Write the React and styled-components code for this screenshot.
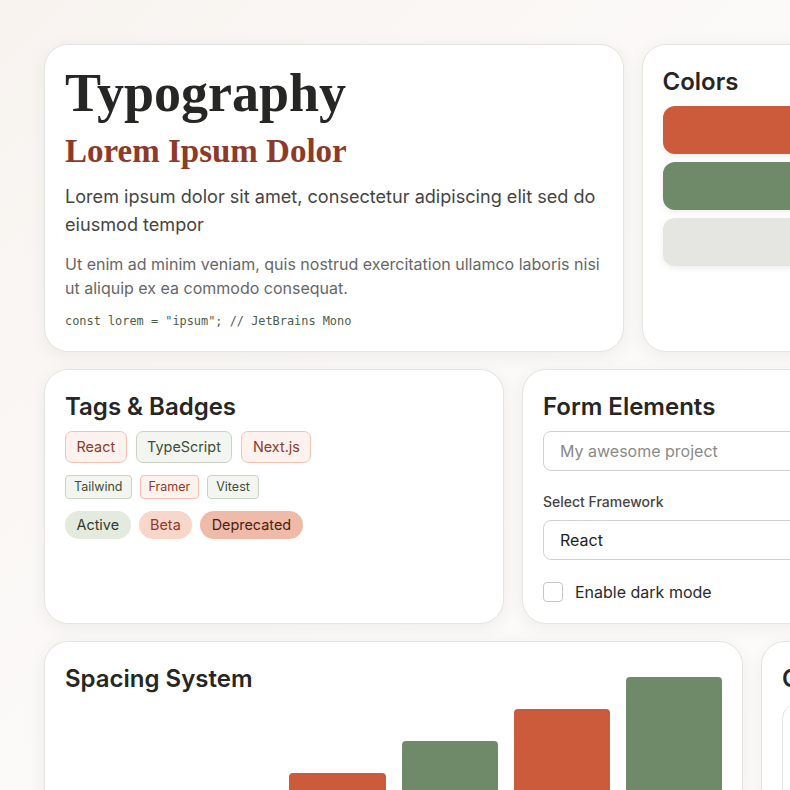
import React from "react";
import styled, { createGlobalStyle } from "styled-components";

const GlobalStyle = createGlobalStyle`
  html, body {
    margin: 0;
    padding: 0;
    overflow: hidden;
  }

  body {
    background: linear-gradient(135deg, #f8f3ef 0%, #fbf9f7 40%, #fdfcfb 100%);
    font-family: Inter, "Noto Sans", sans-serif;
    color: #262624;
  }

  * {
    box-sizing: border-box;
  }
`;

const Page = styled.div`
  padding: 44px;
  width: 1600px;
  min-height: 790px;
`;

const Grid = styled.div`
  display: grid;
  grid-template-columns: repeat(12, 101.5px);
  column-gap: 18px;
  row-gap: 17px;
`;

const Card = styled.section`
  grid-column: span ${(props) => props.$span || 4};
  background: #ffffff;
  border: 1.5px solid #e6e4e0;
  border-radius: 24px;
  padding: 23px 20px 21px;
  box-shadow: 0 4px 18px rgba(40, 30, 20, 0.06);
  overflow: hidden;
`;

const CardTitle = styled.h2`
  margin: 0 0 9px;
  font-size: 24px;
  line-height: 1.2;
  font-weight: 600;
  color: #262624;
  white-space: nowrap;
`;

/* Typography */

const Display = styled.h1`
  margin: -2px 0 0;
  font-family: "Liberation Serif", "Times New Roman", serif;
  font-size: 54px;
  line-height: 1;
  font-weight: 700;
  color: #262624;
`;

const SubDisplay = styled.h3`
  margin: 12px 0 0;
  font-family: "Liberation Serif", "Times New Roman", serif;
  font-size: 33px;
  line-height: 38px;
  font-weight: 700;
  color: #8e3a2a;
`;

const Lead = styled.p`
  margin: 12px 0 0;
  font-size: 18.1px;
  line-height: 28px;
  color: #454545;
`;

const Body = styled.p`
  margin: 14px 0 0;
  font-size: 16px;
  line-height: 24px;
  color: #676767;
`;

const Code = styled.code`
  display: block;
  margin-top: 12px;
  font-family: "DejaVu Sans Mono", "Liberation Mono", monospace;
  font-size: 11.9px;
  line-height: 18px;
  color: #4d5d47;
`;

/* Colors */

const SwatchList = styled.div`
  display: flex;
  flex-direction: column;
  gap: 8px;
`;

const Swatch = styled.div`
  height: 48px;
  border-radius: 12px;
  background: ${(props) => props.$color};
  box-shadow: 0 2px 6px rgba(0, 0, 0, 0.08);
`;

/* Tags */

const TagRows = styled.div`
  display: flex;
  flex-direction: column;
  gap: 12px;
`;

const TagRow = styled.div`
  display: flex;
  gap: ${(props) => props.$gap || 9}px;
`;

const tones = {
  rust: { bg: "#fdf2ee", border: "#f1c1b2", color: "#8e3a2a" },
  sage: { bg: "#f3f6f0", border: "#cad3c2", color: "#3e4c39" },
};

const Tag = styled.span`
  display: inline-flex;
  align-items: center;
  height: ${(props) => (props.$small ? 24 : 32)}px;
  padding: 0 ${(props) => (props.$small ? 8 : 10.5)}px;
  border-radius: ${(props) => (props.$small ? 4 : 7)}px;
  font-size: ${(props) => (props.$small ? 12.5 : 14.4)}px;
  background: ${(props) => tones[props.$tone].bg};
  border: 1px solid ${(props) => tones[props.$tone].border};
  color: ${(props) => tones[props.$tone].color};
`;

const pills = {
  active: { bg: "#e4eadd", color: "#2f3a2c" },
  beta: { bg: "#f8d6ca", color: "#8e3a2a" },
  deprecated: { bg: "#efbba8", color: "#4a1e14" },
};

const Pill = styled.span`
  display: inline-flex;
  align-items: center;
  height: 28px;
  padding: 0 11.5px;
  border-radius: 14px;
  font-size: 14.4px;
  background: ${(props) => pills[props.$kind].bg};
  color: ${(props) => pills[props.$kind].color};
`;

/* Form */

const Field = styled.div`
  display: flex;
  align-items: center;
  height: 40px;
  padding: 0 16px;
  border: 1px solid #d3d1cd;
  border-radius: 8px;
  font-size: 16px;
  color: ${(props) => (props.$placeholder ? "#8a8a88" : "#222")};
  white-space: nowrap;
`;

const Label = styled.label`
  display: block;
  margin: 21px 0 8px;
  font-size: 14px;
  line-height: 20px;
  font-weight: 500;
  color: #454545;
`;

const CheckRow = styled.div`
  display: flex;
  align-items: center;
  gap: 12px;
  margin-top: 22px;
  font-size: 16px;
  color: #2a2a2a;
`;

const Checkbox = styled.span`
  width: 20px;
  height: 20px;
  border: 1.5px solid #c6c5c2;
  border-radius: 4px;
  background: #fff;
`;

/* Spacing */

const Bars = styled.div`
  display: flex;
  align-items: flex-end;
  gap: 16px;
  height: 166px;
`;

const Bar = styled.div`
  flex: 1;
  border-radius: 4px 4px 0 0;
  background: ${(props) => (props.$alt ? "#6f8a69" : "#cb5b3a")};
`;

const InnerCard = styled.div`
  height: 200px;
  border: 1.5px solid #e6e4e0;
  border-radius: 16px;
  background: #fff;
`;

const bars = [32, 64, 96, 128, 160, 192];

export default function App() {
  return (
    <>
      <GlobalStyle />
      <Page>
        <Grid>
          <Card $span={5}>
            <Display>Typography</Display>
            <SubDisplay>Lorem Ipsum Dolor</SubDisplay>
            <Lead>
              Lorem ipsum dolor sit amet, consectetur adipiscing elit sed do
              eiusmod tempor
            </Lead>
            <Body>
              Ut enim ad minim veniam, quis nostrud exercitation ullamco laboris
              nisi ut aliquip ex ea commodo consequat.
            </Body>
            <Code>const lorem = "ipsum"; // JetBrains Mono</Code>
          </Card>

          <Card $span={3}>
            <CardTitle>Colors</CardTitle>
            <SwatchList>
              <Swatch $color="#cb5b3a" />
              <Swatch $color="#6f8a69" />
              <Swatch $color="#e5e5e1" />
            </SwatchList>
          </Card>

          <Card $span={4} />

          <Card $span={4}>
            <CardTitle>Tags &amp; Badges</CardTitle>
            <TagRows>
              <TagRow>
                <Tag $tone="rust">React</Tag>
                <Tag $tone="sage">TypeScript</Tag>
                <Tag $tone="rust">Next.js</Tag>
              </TagRow>
              <TagRow $gap={8}>
                <Tag $small $tone="sage">Tailwind</Tag>
                <Tag $small $tone="rust">Framer</Tag>
                <Tag $small $tone="sage">Vitest</Tag>
              </TagRow>
              <TagRow $gap={8}>
                <Pill $kind="active">Active</Pill>
                <Pill $kind="beta">Beta</Pill>
                <Pill $kind="deprecated">Deprecated</Pill>
              </TagRow>
            </TagRows>
          </Card>

          <Card $span={4}>
            <CardTitle>Form Elements</CardTitle>
            <Field $placeholder>My awesome project</Field>
            <Label>Select Framework</Label>
            <Field>React</Field>
            <CheckRow>
              <Checkbox />
              Enable dark mode
            </CheckRow>
          </Card>

          <Card $span={4} />

          <Card $span={6}>
            <CardTitle>Spacing System</CardTitle>
            <Bars>
              {bars.map((h, i) => (
                <Bar key={h} $alt={i % 2 === 1} style={{ height: h }} />
              ))}
            </Bars>
          </Card>

          <Card $span={6}>
            <CardTitle>Cards</CardTitle>
            <InnerCard />
          </Card>
        </Grid>
      </Page>
    </>
  );
}
